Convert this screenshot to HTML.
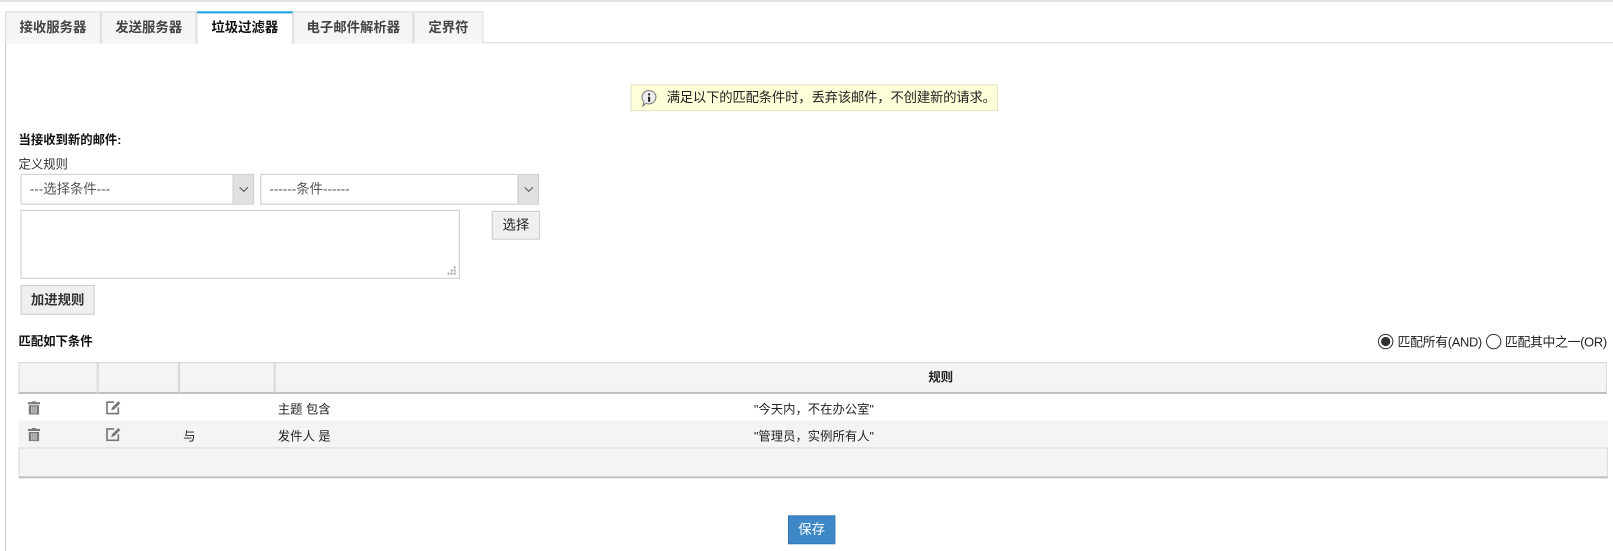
<!DOCTYPE html>
<html><head><meta charset="utf-8"><style>
*{box-sizing:border-box;margin:0;padding:0}
body{width:1613px;height:550px;background:#fff;font-family:"Liberation Sans","Noto Sans CJK SC",sans-serif;font-size:12px;color:#222;position:relative;overflow:hidden}
#w{position:absolute;left:0;top:0;width:1568px;height:535px;transform:scale(1.0287);transform-origin:0 0}
.a{position:absolute}
.tab{position:absolute;top:11px;height:31px;background:#f5f5f5;border:1px solid #ddd;border-bottom:none;font-weight:bold;color:#444;font-size:13px;text-align:center;line-height:30px}
.tab.on{background:#fff;border-top:2px solid #1aa0dc;color:#111;height:32px;line-height:28px}
.sel{position:absolute;height:30px;border:1px solid #ccc;background:#fff;color:#555;font-size:13px;line-height:28px;padding-left:8px}
.sel .ar{position:absolute;right:0;top:0;width:20px;height:28px;background:#e0e0e0;border-left:1px solid #ccc}
.btn{position:absolute;background:#efefef;border:1px solid #ccc;font-size:13px;text-align:center}
.th{position:absolute;top:352px;height:31px;background:#f4f4f4;border:1px solid #d8d8d8;border-bottom:2px solid #c0c0c0}
</style></head><body><div id="w">
<div class="a" style="left:0;top:0;width:1568px;height:2px;background:#e4e4e4"></div>
<div class="a" style="left:5px;top:41px;width:1563px;height:1px;background:#ddd"></div>
<div class="a" style="left:5px;top:41px;width:1px;height:495px;background:#ccc"></div>
<div class="tab" style="left:5px;width:93px">接收服务器</div>
<div class="tab" style="left:98px;width:93px">发送服务器</div>
<div class="tab on" style="left:191px;width:94px">垃圾过滤器</div>
<div class="tab" style="left:285px;width:117px">电子邮件解析器</div>
<div class="tab" style="left:402px;width:68px">定界符</div>

<div class="a" style="left:613px;top:82px;width:357px;height:26px;background:#ffffd9;border:1px solid #e2e2c8;font-size:13px;line-height:24px;padding-left:34px;color:#222;white-space:nowrap;overflow:visible">
<svg class="a" style="left:8px;top:4px" width="18" height="18" viewBox="0 0 18 18"><path d="M9 1a7 6.5 0 1 1-3 12.5L3 16l1-4A7 6.5 0 0 1 9 1z" fill="#eee" stroke="#777"/><circle cx="9" cy="4.8" r="1.1" fill="#222"/><rect x="8" y="7" width="2" height="5" fill="#222"/></svg>
<span style="letter-spacing:-0.2px">满足以下的匹配条件时，丢弃该邮件，不创建新的请求。</span></div>

<div class="a" style="left:18px;top:127px;font-weight:bold;font-size:12px;color:#111">当接收到新的邮件:</div>
<div class="a" style="left:18px;top:151px;font-size:12px;color:#333">定义规则</div>
<div class="sel" style="left:20px;top:169px;width:227px">---选择条件---<div class="ar"><svg width="20" height="28"><path d="M6 12l4 4 4-4" fill="none" stroke="#555"/></svg></div></div>
<div class="sel" style="left:253px;top:169px;width:271px">------条件------<div class="ar"><svg width="20" height="28"><path d="M6 12l4 4 4-4" fill="none" stroke="#555"/></svg></div></div>
<div class="a" style="left:20px;top:204px;width:427px;height:67px;border:1px solid #ccc"><svg class="a" style="right:2px;bottom:2px" width="10" height="10"><g fill="#aaa"><rect x="7" y="1" width="2" height="2"/><rect x="4" y="4" width="2" height="2"/><rect x="7" y="4" width="2" height="2"/><rect x="1" y="7" width="2" height="2"/><rect x="4" y="7" width="2" height="2"/><rect x="7" y="7" width="2" height="2"/></g></svg></div>
<div class="btn" style="left:478px;top:205px;width:47px;height:28px;line-height:26px">选择</div>
<div class="btn" style="left:20px;top:277px;width:72px;height:29px;line-height:27px;font-weight:bold;color:#333">加进规则</div>

<div class="a" style="left:18px;top:323px;font-weight:bold;color:#111">匹配如下条件</div>
<div class="a" style="right:6px;top:322px;font-size:12.5px;letter-spacing:-0.3px;color:#222;white-space:nowrap">
<svg style="vertical-align:-3px" width="16" height="16"><circle cx="8" cy="8" r="7" fill="#fff" stroke="#333"/><circle cx="8" cy="8" r="4.5" fill="#333"/></svg> 匹配所有(AND) <svg style="vertical-align:-3px" width="16" height="16"><circle cx="8" cy="8" r="7" fill="#fff" stroke="#333"/></svg> 匹配其中之一(OR)</div>

<div class="th" style="left:18px;width:77px"></div>
<div class="th" style="left:95px;width:79px"></div>
<div class="th" style="left:174px;width:93px"></div>
<div class="th" style="left:267px;width:1295px;text-align:center;font-weight:bold;line-height:29px">规则</div>

<div class="a" style="left:18px;top:409px;width:1545px;height:26px;background:#f4f4f4"></div>
<div class="a" style="left:18px;top:435px;width:1545px;height:30px;background:#f4f4f4;border:1px solid #d8d8d8;border-bottom:2px solid #c0c0c0"></div>

<svg class="a" style="left:27px;top:390px" width="12" height="13" viewBox="0 0 12 13"><rect x="0" y="1" width="12" height="2" fill="#777"/><rect x="4" y="0" width="4" height="1" fill="#777"/><path d="M1 4h10v9H1z" fill="#777"/><path d="M4 5v7M6 5v7M8 5v7" stroke="#fff" stroke-width=".8"/></svg>
<svg class="a" style="left:27px;top:416px" width="12" height="13" viewBox="0 0 12 13"><rect x="0" y="1" width="12" height="2" fill="#777"/><rect x="4" y="0" width="4" height="1" fill="#777"/><path d="M1 4h10v9H1z" fill="#777"/><path d="M4 5v7M6 5v7M8 5v7" stroke="#fff" stroke-width=".8"/></svg>
<svg class="a" style="left:103px;top:389px" width="15" height="14" viewBox="0 0 15 14"><path d="M8 2H1v11h11V7" fill="none" stroke="#777" stroke-width="1.6"/><path d="M5 10l1-3 6-6 2 2-6 6z" fill="#777"/></svg>
<svg class="a" style="left:103px;top:415px" width="15" height="14" viewBox="0 0 15 14"><path d="M8 2H1v11h11V7" fill="none" stroke="#777" stroke-width="1.6"/><path d="M5 10l1-3 6-6 2 2-6 6z" fill="#777"/></svg>
<div class="a" style="left:270px;top:389px">主题 包含</div>
<div class="a" style="left:733px;top:389px">"今天内，不在办公室"</div>
<div class="a" style="left:178px;top:415px">与</div>
<div class="a" style="left:270px;top:415px">发件人 是</div>
<div class="a" style="left:733px;top:415px">"管理员，实例所有人"</div>

<div class="a" style="left:766px;top:501px;width:46px;height:28px;background:#3f88c8;border:1px solid #3579b5;color:#fff;font-size:13px;text-align:center;line-height:26px">保存</div>
</div></body></html>
